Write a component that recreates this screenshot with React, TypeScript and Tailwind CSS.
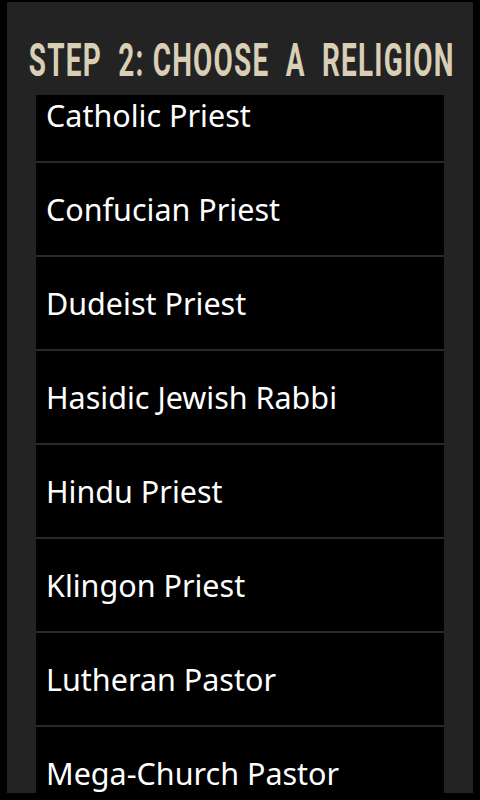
import React from "react";

const items = [
  "Catholic Priest",
  "Confucian Priest",
  "Dudeist Priest",
  "Hasidic Jewish Rabbi",
  "Hindu Priest",
  "Klingon Priest",
  "Lutheran Pastor",
  "Mega-Church Pastor",
  "Methodist Minister",
];

export default function App() {
  return (
    <div className="w-[480px] h-[800px] bg-black pt-[2px] pb-[7px] pl-[7px] pr-[7px] overflow-hidden">
      <div className="h-full bg-[#232323] flex flex-col overflow-hidden">
        <div className="h-[93px] shrink-0 flex items-center justify-center pt-[22px] pl-[4px] overflow-hidden">
          <h1
            className="inline-block text-[#d9ceb6] font-bold uppercase leading-none whitespace-nowrap text-[46px] tracking-[2px] scale-x-[0.607] origin-center"
            style={{ fontFamily: 'Roboto, "Liberation Sans", sans-serif' }}
          >
            Step&nbsp; 2: Choose&nbsp; a&nbsp; Religion
          </h1>
        </div>
        <div className="flex-1 ml-[29px] mr-[29px] bg-black overflow-hidden">
          <ul className="-mt-[26px]">
            {items.map((t) => (
              <li
                key={t}
                className="h-[94px] flex items-center pl-[10px] pt-[2px] border-b-2 border-[#292929] text-white text-[30.5px]"
                style={{ fontFamily: '"Noto Sans", "Open Sans", sans-serif' }}
              >
                {t}
              </li>
            ))}
          </ul>
        </div>
      </div>
    </div>
  );
}
